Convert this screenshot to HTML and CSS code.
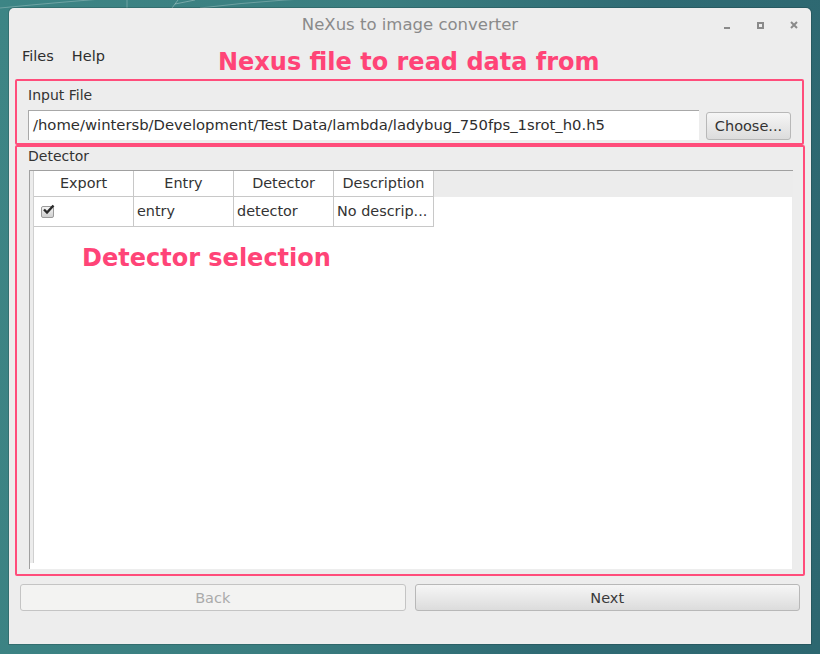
FILE: index.html
```html
<!DOCTYPE html>
<html>
    <head>
        <link rel="stylesheet" href="styles.css">
        <title>NeXus to image converter</title>
    </head>

    <body>
        <svg class="desktop-lines" width="820" height="10" viewBox="0 0 820 10">
            <path d="M0 8 Q 60 2 140 -4" stroke="rgba(255,255,255,0.25)" fill="none"/>
            <path d="M200 8 Q 280 -2 380 -4" stroke="rgba(255,255,255,0.25)" fill="none"/>
            <path d="M127 0 L 127 8" stroke="rgba(255,255,255,0.25)"/>
            <path d="M172 8 L 178 0 M175 4 L 195 0" stroke="rgba(255,255,255,0.3)" fill="none"/>
        </svg>

        <div class="window">
            <div class="titlebar">
                <div class="title">NeXus to image converter</div>
                <div class="window-controls">
                    <span class="ctl ctl-min"></span>
                    <span class="ctl ctl-max"></span>
                    <span class="ctl ctl-close">
                        <svg width="8" height="8" viewBox="0 0 8 8"><path d="M1 1 L7 7 M7 1 L1 7" stroke="#8a8a8a" stroke-width="2"/></svg>
                    </span>
                </div>
            </div>

            <div class="menubar">
                <span class="menu-item">Files</span>
                <span class="menu-item">Help</span>
            </div>

            <div class="content">
                <div class="group input-group">
                    <div class="group-label">Input File</div>
                    <div class="file-row">
                        <div class="file-field">/home/wintersb/Development/Test Data/lambda/ladybug_750fps_1srot_h0.h5</div>
                        <button class="btn choose-btn">Choose...</button>
                    </div>
                </div>

                <div class="group detector-group">
                    <div class="group-label">Detector</div>
                    <div class="table">
                        <div class="table-head">
                            <div class="vhead"></div>
                            <div class="th">Export</div>
                            <div class="th">Entry</div>
                            <div class="th">Detector</div>
                            <div class="th">Description</div>
                        </div>
                        <div class="table-body">
                            <div class="table-row">
                                <div class="vhead"></div>
                                <div class="td">
                                    <span class="checkbox">
                                        <svg width="13" height="11" viewBox="0 0 13 11"><path d="M2 5.5 L5 8.5 L11.5 1.5" stroke="#2a2a2a" stroke-width="2.4" fill="none"/></svg>
                                    </span>
                                </div>
                                <div class="td">entry</div>
                                <div class="td">detector</div>
                                <div class="td">No descrip...</div>
                            </div>
                            <div class="table-empty">
                                <div class="vhead"></div>
                                <div class="empty-area"></div>
                            </div>
                        </div>
                    </div>
                </div>

                <div class="nav-row">
                    <button class="btn nav-btn" disabled>Back</button>
                    <button class="btn nav-btn next-btn">Next</button>
                </div>
            </div>

            <div class="note note-input">Nexus file to read data from</div>
            <div class="note note-detector">Detector selection</div>
        </div>
    </body>
</html>
```

FILE: styles.css
```css
body {
    margin: 0;
    width: 820px;
    height: 654px;
    overflow: hidden;
    background: linear-gradient(100deg, #3d8585 0%, #3a7e80 40%, #2f6b74 70%, #2d6770 100%);
    font-family: "DejaVu Sans", sans-serif;
    position: relative;
}

.desktop-lines {
    position: absolute;
    top: 0;
    left: 0;
}

.window {
    position: relative;
    margin: 8px 0 0 9px;
    width: 802px;
    height: 636px;
    background-color: #ededed;
    border-radius: 5px 5px 0 0;
    display: flex;
    flex-direction: column;
    box-shadow: 0 0 0 1px rgba(0, 0, 0, 0.15);
}

.titlebar {
    height: 34px;
    display: flex;
    align-items: center;
    justify-content: center;
    position: relative;
}

.title {
    font-family: "DejaVu Sans", sans-serif;
    font-size: 16.5px;
    color: #8a8a8a;
    margin-top: -1px;
}

.window-controls {
    position: absolute;
    right: 13px;
    top: 13px;
    display: flex;
    gap: 26px;
    align-items: center;
}

.ctl {
    width: 8px;
    height: 8px;
    display: flex;
}

.ctl-min::after {
    content: '';
    width: 6px;
    height: 2px;
    margin-top: 6px;
    margin-left: 1px;
    background-color: #8a8a8a;
}

.ctl-max {
    box-sizing: border-box;
    width: 7px;
    height: 7px;
    border: 2px solid #8a8a8a;
}

.menubar {
    height: 28px;
    display: flex;
    align-items: center;
    gap: 18px;
    padding-left: 13px;
    font-family: "DejaVu Sans", sans-serif;
    font-size: 14.5px;
    color: #2e2e2e;
}

.content {
    padding: 9px 6px 0 6px;
    display: flex;
    flex-direction: column;
}

.group {
    border: 2px solid #ff4d7b;
    border-radius: 2px;
    font-size: 14px;
    color: #333;
}

.group-label {
    padding-left: 11px;
}

.input-group {
    height: 62px;
    margin-right: 1px;
}

.input-group .group-label {
    padding-top: 6px;
    height: 23px;
    line-height: 17px;
}

.file-row {
    display: flex;
    align-items: center;
    padding-left: 11px;
    gap: 7px;
}

.file-field {
    width: 671px;
    height: 30px;
    box-sizing: border-box;
    background-color: #fff;
    border-top: 1px solid #a8a8a8;
    border-left: 1px solid #a8a8a8;
    padding-left: 4px;
    line-height: 28px;
    font-size: 14.8px;
    color: #2e2e2e;
    white-space: nowrap;
}

.btn {
    font-family: "DejaVu Sans", sans-serif;
    font-size: 14.5px;
    color: #333;
    border: 1px solid #b8b8b8;
    border-radius: 3px;
    background: linear-gradient(to bottom, #f6f6f6, #dcdcdc);
}

.choose-btn {
    width: 85px;
    height: 28px;
    padding: 0;
    margin-top: 1px;
}

.detector-group {
    height: 427px;
}

.detector-group .group-label {
    height: 22px;
    line-height: 17px;
    padding-top: 1px;
}

.table {
    margin-left: 12px;
    width: 763px;
    height: 398px;
    border-top: 1px solid #a0a0a0;
    border-left: 1px solid #a0a0a0;
    background-color: #ececec;
    display: flex;
    flex-direction: column;
}

.vhead {
    width: 3px;
    flex-shrink: 0;
    background-color: #ececec;
    border-right: 1px solid #d0d0d0;
}

.table-head {
    display: flex;
    height: 26px;
    background-color: #ececec;
}

.th,
.td {
    width: 99px;
    box-sizing: content-box;
    border-right: 1px solid #c8c8c8;
    border-bottom: 1px solid #c8c8c8;
    background-color: #fff;
    font-size: 14.4px;
    color: #333;
    white-space: nowrap;
    overflow: hidden;
}

.th {
    height: 25px;
    line-height: 25px;
    text-align: center;
    background-color: #fff;
}

.table-body {
    flex: 1;
    display: flex;
    flex-direction: column;
    background-color: #fff;
    margin-right: 1px;
}

.table-row {
    display: flex;
    height: 30px;
}

.td {
    height: 29px;
    line-height: 29px;
    padding-left: 3px;
    width: 96px;
}

.checkbox {
    display: inline-flex;
    width: 11px;
    height: 10px;
    margin-left: 4px;
    margin-top: 9px;
    vertical-align: top;
    background: linear-gradient(to bottom, #f4f4f4, #cfcfcf);
    border: 1px solid #9a9a9a;
    border-radius: 2px;
    position: relative;
}

.checkbox svg {
    position: absolute;
    left: 0;
    top: -3px;
}

.table-empty {
    flex: 1;
    display: flex;
    margin-bottom: 6px;
}

.empty-area {
    flex: 1;
    background-color: #fff;
}

.nav-row {
    display: flex;
    gap: 9px;
    padding: 8px 5px 0 5px;
}

.nav-btn {
    flex: 1;
    height: 27px;
    font-size: 14.5px;
    font-family: "DejaVu Sans", sans-serif;
    font-weight: normal;
    color: #3a3a3a;
}

.nav-btn:disabled {
    background: #f3f3f2;
    color: #aaa;
    border-color: #c4c4c4;
}

.note {
    position: absolute;
    font-family: "DejaVu Sans", sans-serif;
    font-weight: bold;
    font-size: 24px;
    color: #ff4477;
    white-space: nowrap;
}

.note-input {
    left: 209px;
    top: 40px;
}

.note-detector {
    left: 73px;
    top: 236px;
}
```
